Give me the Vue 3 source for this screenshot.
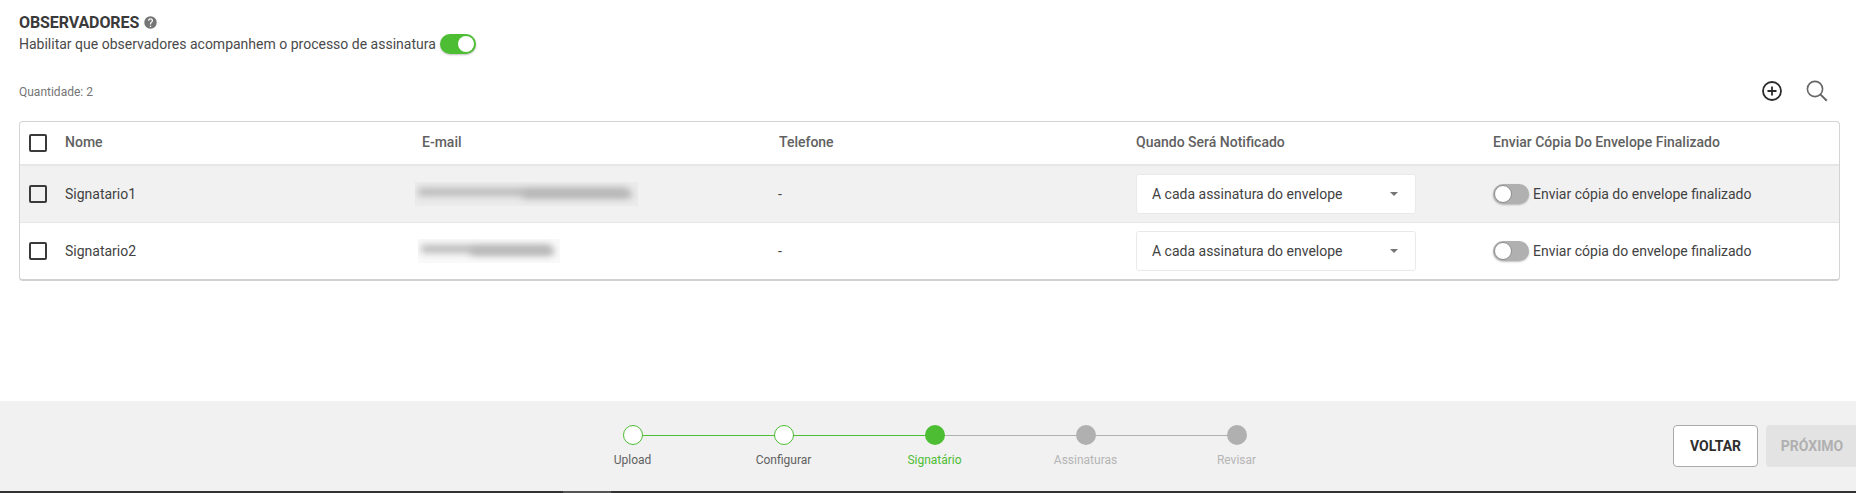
<script setup>
const rows = [
  { name: 'Signatario1', boxW: 223, barW: 210, tailW: 110, boxOff: -7 },
  { name: 'Signatario2', boxW: 142, barW: 130, tailW: 84, boxOff: -4 },
]
const steps = [
  { label: 'Upload', state: 'done' },
  { label: 'Configurar', state: 'done' },
  { label: 'Signatário', state: 'current' },
  { label: 'Assinaturas', state: 'todo' },
  { label: 'Revisar', state: 'todo' },
]
</script>

<template>
  <div class="page">
    <main class="content">
      <div class="title-row">
        <h2 class="title">OBSERVADORES</h2>
        <svg class="help" viewBox="0 0 24 24" width="15" height="15">
          <path fill="#757575" d="M12 2a10 10 0 1 0 0 20 10 10 0 0 0 0-20zm1 17h-2v-2h2v2zm2.07-7.75-.9.92C13.45 12.9 13 13.5 13 15h-2v-.5c0-1.1.45-2.1 1.17-2.83l1.24-1.26c.37-.36.59-.86.59-1.41a2 2 0 1 0-4 0H8a4 4 0 1 1 8 0c0 .88-.36 1.68-.93 2.25z"/>
        </svg>
      </div>
      <div class="enable-row">
        <span>Habilitar que observadores acompanhem o processo de assinatura</span>
        <span class="toggle on"><i class="knob"></i></span>
      </div>

      <div class="tools-row">
        <span class="count">Quantidade: 2</span>
        <div class="tools">
          <svg viewBox="0 0 24 24" width="24" height="24">
            <circle cx="12" cy="12" r="9" fill="none" stroke="#2b2b2b" stroke-width="1.8"/>
            <path d="M12 7.5v9M7.5 12h9" stroke="#2b2b2b" stroke-width="1.8" fill="none"/>
          </svg>
          <svg viewBox="0 0 24 24" width="24" height="24">
            <circle cx="10" cy="10" r="7.6" fill="none" stroke="#666" stroke-width="1.6"/>
            <path d="M15.6 15.6 21.8 21.8" stroke="#666" stroke-width="2" fill="none"/>
          </svg>
        </div>
      </div>

      <div class="table">
        <div class="row head">
          <div class="check-cell"><span class="check"></span></div>
          <div class="cell">Nome</div>
          <div class="cell">E-mail</div>
          <div class="cell">Telefone</div>
          <div class="cell">Quando Será Notificado</div>
          <div class="cell">Enviar Cópia Do Envelope Finalizado</div>
        </div>
        <div v-for="(r, i) in rows" :key="r.name" class="row body" :class="{ shaded: i === 0 }">
          <div class="check-cell"><span class="check"></span></div>
          <div class="cell">{{ r.name }}</div>
          <div class="cell">
            <div class="blur-box" :style="{ width: r.boxW + 'px', marginLeft: r.boxOff + 'px' }">
              <span class="blur" :style="{ width: r.barW + 'px' }"></span>
              <span class="blur tail" :style="{ width: r.tailW + 'px' }"></span>
            </div>
          </div>
          <div class="cell dash">-</div>
          <div class="cell">
            <div class="select">
              <span>A cada assinatura do envelope</span>
              <i class="caret"></i>
            </div>
          </div>
          <div class="cell copy">
            <span class="toggle off"><i class="knob"></i></span>
            <span>Enviar cópia do envelope finalizado</span>
          </div>
        </div>
      </div>
    </main>

    <footer class="footer">
      <div class="stepper">
        <div v-for="(s, i) in steps" :key="s.label" class="step" :class="s.state">
          <span v-if="i < steps.length - 1" class="line"></span>
          <span class="dot"></span>
          <span class="label">{{ s.label }}</span>
        </div>
      </div>
      <div class="actions">
        <button class="btn back">VOLTAR</button>
        <button class="btn next" disabled>PRÓXIMO</button>
      </div>
    </footer>
    <div class="edge"><span class="edge-mark"></span></div>
  </div>
</template>

<style>
html, body { margin: 0; background: #fff; overflow: hidden; }
</style>

<style scoped>
.page {
  width: 1856px;
  height: 493px;
  display: flex;
  flex-direction: column;
  font-family: Roboto, "Liberation Sans", sans-serif;
  color: #424242;
  position: relative;
  overflow: hidden;
}
.content { flex: 1; padding: 13px 16px 0 19px; min-height: 0; }
.title-row { display: flex; align-items: center; gap: 4px; height: 19px; }
.title { margin: 0; font-size: 16px; font-weight: 700; color: #3a3a3a; line-height: 19px; letter-spacing: -.1px; }
.help { display: block; }
.enable-row { display: flex; align-items: center; gap: 4px; height: 24px; font-size: 14px; color: #4a4a4a; }
.toggle { display: inline-block; position: relative; width: 36px; height: 20px; border-radius: 10px; box-shadow: 0 1px 2px rgba(0,0,0,.25); flex: none; }
.toggle.on { background: #4dbd33; }
.toggle.off { background: #b0b0b0; }
.knob { position: absolute; top: 2px; width: 16px; height: 16px; border-radius: 50%; background: #fff; }
.on .knob { right: 2px; }
.off .knob { left: 1px; top: 1px; width: 16px; height: 16px; border: 1px solid #8c8c8c; }
.tools-row { display: flex; align-items: center; justify-content: space-between; height: 36px; margin-top: 17px; }
.count { font-size: 12px; color: #757575; padding-top: 1px; }
.tools { display: flex; gap: 21px; margin-right: 11px; }
.tools svg { display: block; }
.table { margin-top: 12px; border: 1px solid #d4d4d4; border-bottom: 2px solid #d0d0d0; border-radius: 4px; overflow: hidden; }
.row { display: grid; grid-template-columns: 45px 357px 357px 357px 357px 1fr; align-items: center; font-size: 14px; }
.head { height: 42px; font-weight: 500; color: #616161; border-bottom: 2px solid #e6e6e6; }
.head .cell { position: relative; top: -1px; }
.body { color: #424242; border-bottom: 1px solid #e6e6e6; height: 56px; }
.body:last-child { border-bottom: 0; }
.shaded { background: #f1f1f1; }
.check-cell { display: flex; padding-left: 9px; }
.check { display: block; width: 14px; height: 14px; border: 2px solid #3a3a3a; border-radius: 2px; }
.cell { min-width: 0; }
.dash { margin-left: -1px; }
.blur-box { height: 24px; background: rgba(0,0,0,.025); position: relative; overflow: hidden; }
.blur { display: block; position: absolute; left: 3px; top: 6px; height: 8px; border-radius: 3px; background: #b8b8b8; filter: blur(3.5px); }
.blur.tail { left: auto; right: 6px; top: 9px; height: 7px; background: #b4b4b4; }
.select {
  width: 280px; height: 40px; box-sizing: border-box; padding: 0 17px 0 15px;
  background: #fff; border: 1px solid #e9e9e9; border-radius: 3px;
  display: flex; align-items: center; justify-content: space-between;
}
.caret { width: 0; height: 0; border-left: 4px solid transparent; border-right: 4px solid transparent; border-top: 4px solid #757575; }
.copy { display: flex; align-items: center; gap: 4px; }
.footer {
  height: 90px; flex: none; background: #f1f1f1; display: flex; align-items: flex-start; position: relative;
  padding-top: 24px; box-sizing: border-box;
}
.stepper { display: flex; margin-left: 557px; }
.step { width: 151px; display: flex; flex-direction: column; align-items: center; position: relative; }
.dot { width: 20px; height: 20px; border-radius: 50%; box-sizing: border-box; position: relative; z-index: 1; }
.line { position: absolute; left: 50%; top: 10px; width: 151px; height: 1px; background: #4dbd33; }
.step.current .line, .step.todo .line { background: #b0b0b0; }
.done .dot { background: #fff; border: 1px solid #4dbd33; }
.current .dot { background: #4dbd33; }
.todo .dot { background: #b0b0b0; }
.label { font-size: 12px; margin-top: 7px; line-height: 16px; color: #616161; }
.current .label { color: #4dbd33; }
.todo .label { color: #b5b5b5; }
.actions { position: absolute; left: 1673px; top: 24px; display: flex; gap: 8px; }
.btn { height: 42px; font-family: inherit; font-size: 14px; font-weight: 700; border-radius: 4px; box-sizing: border-box; padding: 0; }
.back { width: 85px; background: #fff; border: 1px solid #aaa; color: #2e2e2e; }
.next { width: 92px; background: #e3e3e3; border: 0; color: #b0b0b0; }
.edge { flex: none; height: 2px; background: #333; position: relative; }
.edge-mark { position: absolute; left: 563px; top: 0; width: 48px; height: 2px; background: #555; }
</style>
